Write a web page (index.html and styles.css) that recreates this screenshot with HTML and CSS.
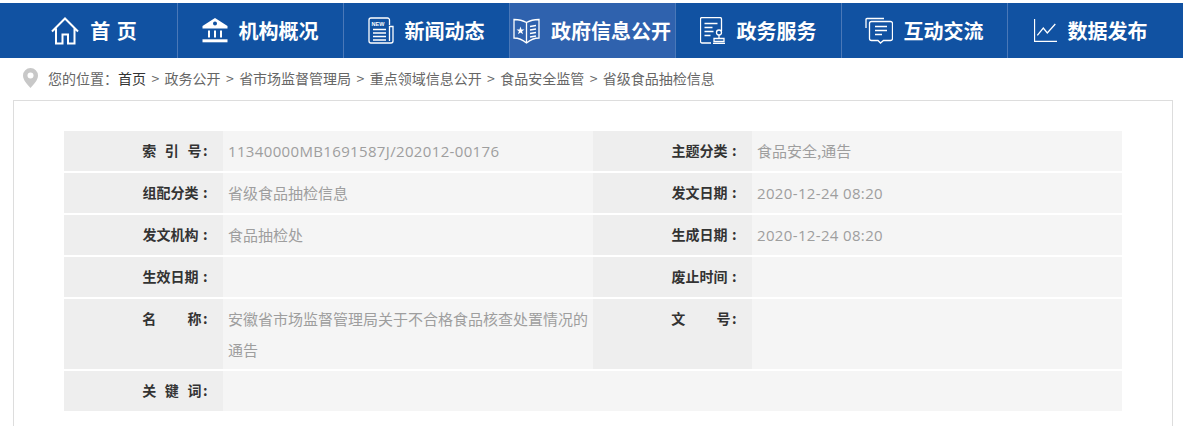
FILE: index.html
```html
<!DOCTYPE html>
<html lang="zh-CN">
<head>
<meta charset="utf-8">
<title>省级食品抽检信息</title>
<link rel="stylesheet" href="styles.css">
</head>
<body>
<nav class="nav">
  <a class="nav-item">
    <svg class="ico" width="28" height="28" viewBox="0 0 28 28"><path d="M1 14.500 14 1.500l13 13M5 11.500V26.500h6.500V17.500h5.500V26.500h6.500V11.500"/></svg>
    <span class="nav-text home">首 页</span>
  </a>
  <a class="nav-item">
    <svg class="ico bank" width="26" height="25" viewBox="0 0 26 25"><path class="fill nostroke" fill-rule="evenodd" d="M13 0 25.500 8v2.500H.5V8zM13 3.500a2 2 0 1 0 0 4 2 2 0 0 0 0-4z"/><path d="M7 12.500v7M13 12.500v7M19 12.500v7"/><path class="base" d="M.5 22.800h25"/></svg>
    <span class="nav-text">机构概况</span>
  </a>
  <a class="nav-item">
    <svg class="ico thin" width="26" height="27" viewBox="0 0 26 27"><path d="M21.500 8V3a2 2 0 0 0-2-2H3a2 2 0 0 0-2 2v21a2 2 0 0 0 2 2h20a2 2 0 0 0 2-2V9.500h-3.500V24"/><text class="new" x="3.500" y="8.500">NEW</text><path d="M5 12.500h13M5 16h13M5 19.500h13M5 23h13"/></svg>
    <span class="nav-text">新闻动态</span>
  </a>
  <a class="nav-item active">
    <svg class="ico thin" width="27" height="27" viewBox="0 0 27 27"><path d="M13.500 5.500C10 3.500 5 2.500 1 2.500v18.500c4 0 9 2 12.500 5 3.500-3 8.500-5 12.500-5V2.500c-4 0-9 1-12.500 3zM13.500 5.500V26"/><path class="fill nostroke" d="m7.500 9.500 1 3h3l-2.400 1.800.9 3-2.500-1.900L5 17.300l.9-3L3.500 12.500h3z"/><path d="M17 9.500l6-1M17 13l6-1M17 16.500l6-1M17 20l6-1"/></svg>
    <span class="nav-text">政府信息公开</span>
  </a>
  <a class="nav-item">
    <svg class="ico thin" width="26" height="27" viewBox="0 0 26 27"><path d="M11 26H2a1.500 1.500 0 0 1-1.500-1.500v-23A1.500 1.500 0 0 1 2 0.500h18a1.500 1.500 0 0 1 1.500 1.500v12"/><path d="M4.500 6.500h13M4.500 10.500h8M4.500 14.500h9M4.500 18.500h6"/><circle cx="19" cy="15.500" r="2.500"/><path d="M19 18v3M14 21.500h10v3H14zM13 26.500h12"/></svg>
    <span class="nav-text">政务服务</span>
  </a>
  <a class="nav-item">
    <svg class="ico thin" width="28" height="27" viewBox="0 0 28 27"><path d="M1 11V2.500a1 1 0 0 1 1-1h17"/><path d="M6.500 4.500h19a2 2 0 0 1 2 2v15a2 2 0 0 1-2 2h-7L15.500 26l-2.500-2.500H6.500a2 2 0 0 1-2-2v-15a2 2 0 0 1 2-2z"/><path d="M10 9.500h12M10 13.500h12M10 17.500h7"/></svg>
    <span class="nav-text">互动交流</span>
  </a>
  <a class="nav-item last">
    <svg class="ico thin" width="23" height="23" viewBox="0 0 23 23"><path d="M.5 0v22.500H23"/><path d="M3.300 16.300 9.300 9l4 5 8-9"/></svg>
    <span class="nav-text">数据发布</span>
  </a>
</nav>

<div class="crumbs">
  <svg class="pin" width="15" height="20" viewBox="0 0 15 20"><path d="M7.500 0A7.500 7.500 0 0 0 0 7.500C0 12 4 16 7.500 20 11 16 15 12 15 7.500A7.500 7.500 0 0 0 7.500 0z"/><circle cx="7.500" cy="7.500" r="3" fill="#fff"/></svg>
  <span class="crumb-label">您的位置：</span>
  <a class="crumb-home">首页</a>
  <span class="sep">&gt;</span><a>政务公开</a>
  <span class="sep">&gt;</span><a>省市场监督管理局</a>
  <span class="sep">&gt;</span><a>重点领域信息公开</a>
  <span class="sep">&gt;</span><a>食品安全监管</a>
  <span class="sep">&gt;</span><a>省级食品抽检信息</a>
</div>

<main class="box">
  <div class="info">
    <div class="k spaced"><span class="w3">索 引 号</span><i class="c">:</i></div><div class="v latin">11340000MB1691587J/202012-00176</div>
    <div class="k">主题分类<i class="c">:</i></div><div class="v">食品安全,通告</div>
    <div class="k">组配分类<i class="c">:</i></div><div class="v">省级食品抽检信息</div>
    <div class="k">发文日期<i class="c">:</i></div><div class="v latin">2020-12-24 08:20</div>
    <div class="k">发文机构<i class="c">:</i></div><div class="v">食品抽检处</div>
    <div class="k">生成日期<i class="c">:</i></div><div class="v latin">2020-12-24 08:20</div>
    <div class="k">生效日期<i class="c">:</i></div><div class="v"></div>
    <div class="k">废止时间<i class="c">:</i></div><div class="v"></div>
    <div class="k spaced"><span class="w2">名 称</span><i class="c">:</i></div><div class="v">安徽省市场监督管理局关于不合格食品核查处置情况的通告</div>
    <div class="k spaced"><span class="w2">文 号</span><i class="c">:</i></div><div class="v"></div>
    <div class="k spaced"><span class="w3">关 键 词</span><i class="c">:</i></div><div class="v wide"></div>
  </div>
</main>
</body>
</html>
```
FILE: styles.css
```css
* { box-sizing: border-box; }
html, body { margin: 0; height: 426px; overflow: hidden; background: #fff; }
body {
  padding-top: 3px;
  font-family: "Noto Sans CJK SC", "Liberation Sans", sans-serif;
}
.nav {
  display: flex;
  height: 55px;
  padding-left: 12px;
  background: #1152a2;
}
.nav-item {
  display: flex;
  flex: 0 0 166px;
  align-items: center;
  justify-content: center;
  gap: 11px;
  padding-right: 1px;
  border-right: 1px solid #4a78b8;
  color: #fff;
}
.nav-item.active { background: #2f62ae; }
.nav-item.last { border-right: 0; }
.nav-text { font-size: 20px; font-weight: 700; line-height: 28px; white-space: nowrap; }
.nav-text.home { word-spacing: 2px; }
.ico { flex: none; fill: none; stroke: #fff; stroke-width: 2; }
.ico.thin { stroke-width: 1.300; }
.ico .fill { fill: #fff; }
.ico .nostroke { stroke: none; }
.ico .base { stroke-width: 3; }
.ico .new { fill: #fff; stroke: none; font-size: 5.500px; font-weight: 700; font-family: "Liberation Sans", sans-serif; }

.crumbs {
  display: flex;
  align-items: center;
  height: 42px;
  padding: 0 0 2px 23px;
  font-size: 14px;
  color: #666;
  white-space: nowrap;
}
.pin { flex: none; margin-right: 10px; fill: #c8c8c8; }
.crumb-home { color: #333; }
.sep { padding: 0 5.400px; }

.box {
  height: 340px;
  margin: 0 10px 0 13px;
  padding: 30px 50px 0;
  border: 1px solid #ddd;
}
.info {
  display: grid;
  grid-template-columns: 159px 370px 159px 370px;
  row-gap: 2px;
}
.k, .v {
  min-height: 40px;
  padding: 4px 5px;
  line-height: 31px;
}
.k {
  padding-right: 15.500px;
  background: #eeeeee;
  font-size: 14px;
  font-weight: 700;
  color: #333;
  text-align: right;
}
.c { margin-left: 4.500px; font-style: normal; }
.spaced .c { margin-left: 1.500px; }
.v {
  background: #f5f5f5;
  font-size: 15px;
  color: #9e9e9e;
}
.v.wide { grid-column: span 3; }
.w3 { word-spacing: 5.400px; }
.w2 { word-spacing: 27.900px; }
.latin {
  padding-top: 5px;
  padding-bottom: 3px;
  font-family: "Open Sans", "Noto Sans CJK SC", sans-serif;
  letter-spacing: .35px;
}
```
